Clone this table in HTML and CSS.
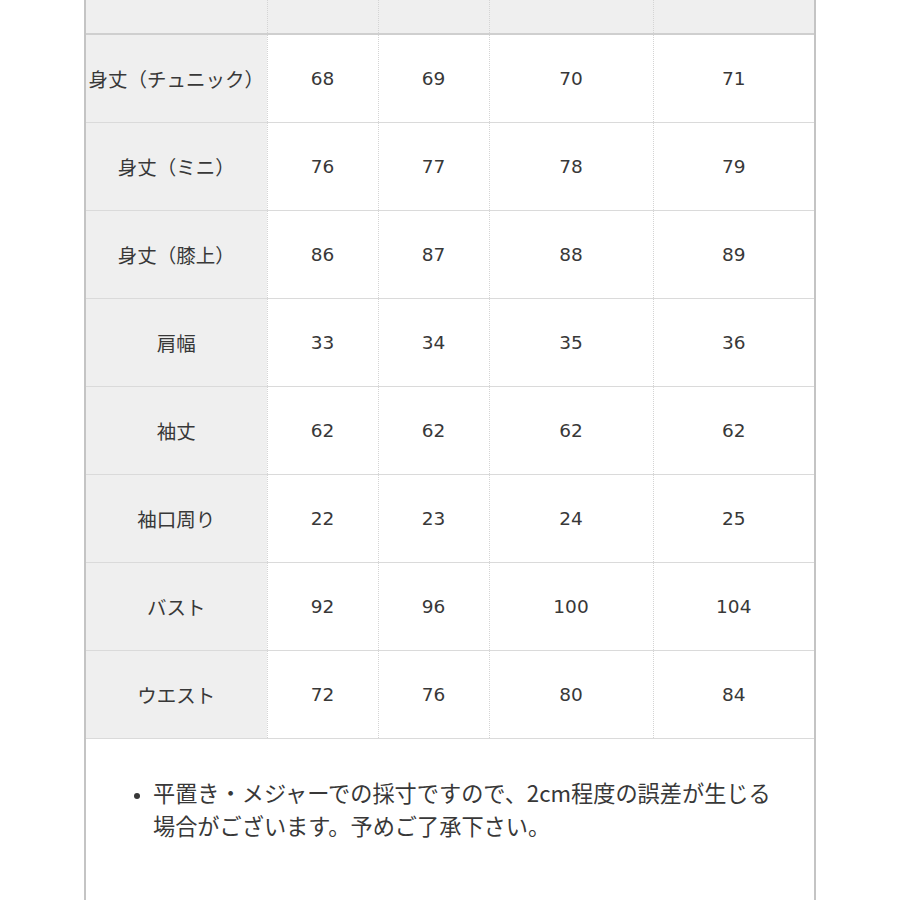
FILE: index.html
```html
<!DOCTYPE html>
<html lang="ja">
<head>
<meta charset="utf-8">
<link rel="stylesheet" href="styles.css">
</head>
<body>
<div class="frame">
  <table class="size">
    <colgroup>
      <col class="c-label"><col class="c-a"><col class="c-b"><col class="c-c"><col class="c-d">
    </colgroup>
    <thead>
      <tr class="head"><th></th><th></th><th></th><th></th><th></th></tr>
    </thead>
    <tbody>
      <tr><th>身丈（チュニック）</th><td>68</td><td>69</td><td>70</td><td>71</td></tr>
      <tr><th>身丈（ミニ）</th><td>76</td><td>77</td><td>78</td><td>79</td></tr>
      <tr><th>身丈（膝上）</th><td>86</td><td>87</td><td>88</td><td>89</td></tr>
      <tr><th>肩幅</th><td>33</td><td>34</td><td>35</td><td>36</td></tr>
      <tr><th>袖丈</th><td>62</td><td>62</td><td>62</td><td>62</td></tr>
      <tr><th>袖口周り</th><td>22</td><td>23</td><td>24</td><td>25</td></tr>
      <tr><th>バスト</th><td>92</td><td>96</td><td>100</td><td>104</td></tr>
      <tr><th>ウエスト</th><td>72</td><td>76</td><td>80</td><td>84</td></tr>
    </tbody>
  </table>
  <ul class="note">
    <li>平置き・メジャーでの採寸ですので、2cm程度の誤差が生じる場合がございます。予めご了承下さい。</li>
  </ul>
</div>
</body>
</html>
```
FILE: styles.css
```css
html, body {
  margin: 0;
  padding: 0;
  background: #fff;
}
body {
  font-family: "Noto Sans CJK JP", "Noto Sans", sans-serif;
  color: #383838;
}
.frame {
  margin-left: 84px;
  width: 728px;
  height: 900px;
  border-left: 2px solid #c4c4c4;
  border-right: 2px solid #c4c4c4;
  background: #fff;
}
.size {
  width: 728px;
  border-collapse: collapse;
  table-layout: fixed;
}
.c-label { width: 181px; }
.c-a { width: 111px; }
.c-b { width: 111px; }
.c-c { width: 164px; }
.c-d { width: 161px; }
.size th, .size td {
  height: 87px;
  padding: 0;
  text-align: center;
  vertical-align: middle;
  font-size: 19.5px;
  font-weight: normal;
  white-space: nowrap;
  border-top: 1px solid #dadada;
  border-bottom: 1px solid #dadada;
  border-left: 1px dotted #d4d4d4;
  border-right: 1px dotted #d4d4d4;
}
.size td {
  font-family: "DejaVu Sans", "Noto Sans CJK JP", sans-serif;
  font-size: 18.5px;
  background: #fff;
}
.size tbody th {
  background: #efefef;
}
.size tr > :first-child { border-left: none; }
.size tr > :last-child { border-right: none; }
.head th {
  height: 33px;
  background: #efefef;
  border-top: none;
  border-bottom: 2px solid #cfcfcf;
}
.note {
  margin: 0;
  padding: 37px 0 0 67px;
  font-size: 22.2px;
  line-height: 33px;
  width: 630px;
  color: #383838;
}
.note li::marker {
  font-size: 16px;
}
```
